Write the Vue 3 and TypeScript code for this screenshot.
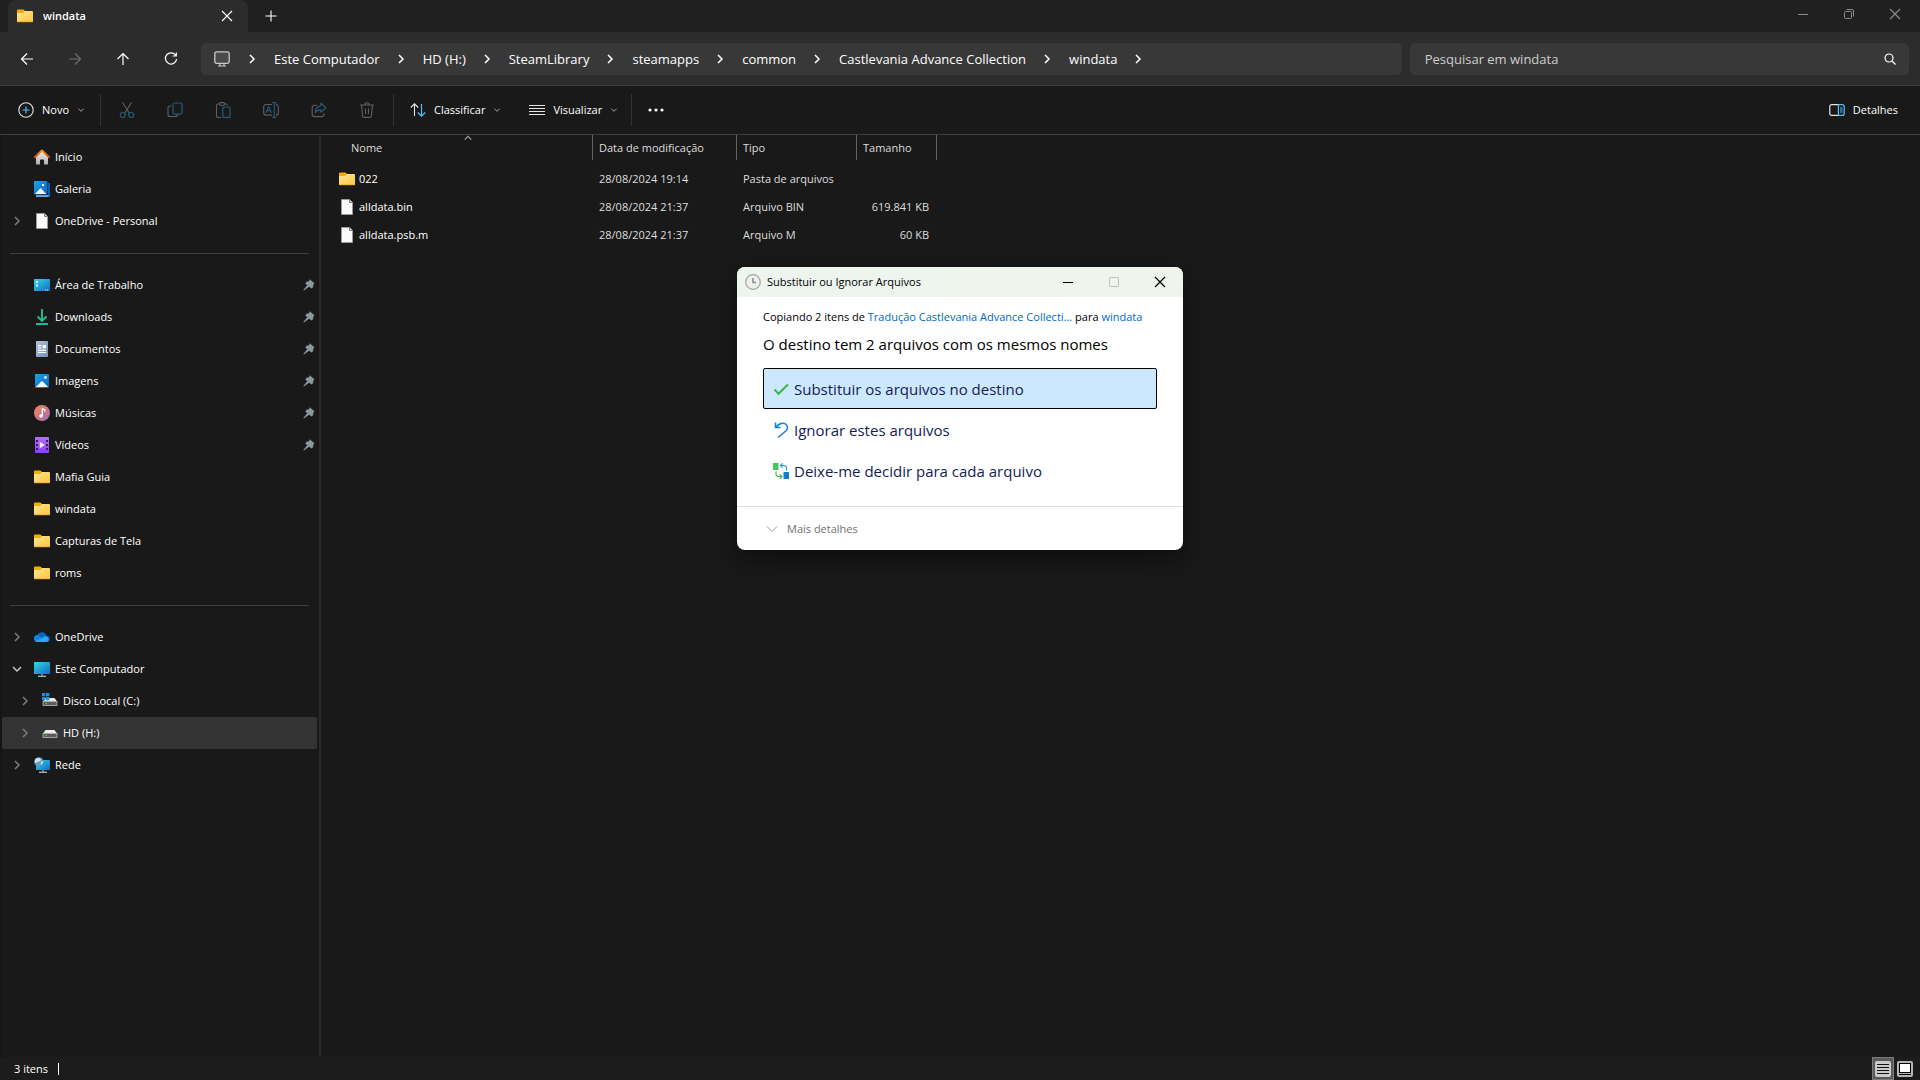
<script setup lang="ts">
import { ref } from 'vue'

interface NavItem {
  label: string
  icon: string
  arrow?: 'right' | 'down'
  pinned?: boolean
  child?: boolean
  selected?: boolean
}

interface FileRow {
  name: string
  icon: string
  date: string
  type: string
  size: string
}

const crumbs = ['Este Computador', 'HD (H:)', 'SteamLibrary', 'steamapps', 'common', 'Castlevania Advance Collection', 'windata']

const history = [
  { label: 'Voltar', icon: 'back', dim: false },
  { label: 'Avançar', icon: 'forward', dim: true },
  { label: 'Acima', icon: 'up', dim: false },
  { label: 'Atualizar', icon: 'refresh', dim: false },
]

const actions = [
  { label: 'Recortar', icon: 'cut' },
  { label: 'Copiar', icon: 'copy' },
  { label: 'Colar', icon: 'paste' },
  { label: 'Renomear', icon: 'rename' },
  { label: 'Compartilhar', icon: 'share' },
  { label: 'Excluir', icon: 'trash' },
]

const groups: NavItem[][] = [
  [
    { label: 'Início', icon: 'home' },
    { label: 'Galeria', icon: 'gallery' },
    { label: 'OneDrive - Personal', icon: 'file', arrow: 'right' },
  ],
  [
    { label: 'Área de Trabalho', icon: 'desktop', pinned: true },
    { label: 'Downloads', icon: 'download', pinned: true },
    { label: 'Documentos', icon: 'document', pinned: true },
    { label: 'Imagens', icon: 'picture', pinned: true },
    { label: 'Músicas', icon: 'music', pinned: true },
    { label: 'Vídeos', icon: 'video', pinned: true },
    { label: 'Mafia Guia', icon: 'folder' },
    { label: 'windata', icon: 'folder' },
    { label: 'Capturas de Tela', icon: 'folder' },
    { label: 'roms', icon: 'folder' },
  ],
  [
    { label: 'OneDrive', icon: 'cloud', arrow: 'right' },
    { label: 'Este Computador', icon: 'pc', arrow: 'down' },
    { label: 'Disco Local (C:)', icon: 'disk-c', arrow: 'right', child: true },
    { label: 'HD (H:)', icon: 'disk', arrow: 'right', child: true, selected: true },
    { label: 'Rede', icon: 'network', arrow: 'right' },
  ],
]

const files: FileRow[] = [
  { name: '022', icon: 'folder', date: '28/08/2024 19:14', type: 'Pasta de arquivos', size: '' },
  { name: 'alldata.bin', icon: 'file', date: '28/08/2024 21:37', type: 'Arquivo BIN', size: '619.841 KB' },
  { name: 'alldata.psb.m', icon: 'file', date: '28/08/2024 21:37', type: 'Arquivo M', size: '60 KB' },
]

const choices = [
  { label: 'Substituir os arquivos no destino', icon: 'check' },
  { label: 'Ignorar estes arquivos', icon: 'undo' },
  { label: 'Deixe-me decidir para cada arquivo', icon: 'decide' },
]

const query = ref('')
const choice = ref(0)
</script>

<template>
  <div class="explorer">
    <svg class="sprite" aria-hidden="true">
      <defs>
        <linearGradient id="g-folder" x1="0" y1="0" x2="1" y2="1">
          <stop offset="0" stop-color="#ffe69c" /><stop offset="1" stop-color="#fdc638" />
        </linearGradient>
        <linearGradient id="g-blue" x1="0" y1="0" x2="1" y2="1">
          <stop offset="0" stop-color="#20a4ea" /><stop offset="1" stop-color="#0b62be" />
        </linearGradient>
        <linearGradient id="g-screen" x1="0" y1="0" x2="1" y2="1">
          <stop offset="0" stop-color="#35d6e8" /><stop offset="1" stop-color="#0f6cc4" />
        </linearGradient>
        <linearGradient id="g-doc" x1="0" y1="0" x2="1" y2="1">
          <stop offset="0" stop-color="#b4c6dc" /><stop offset="1" stop-color="#7490b5" />
        </linearGradient>
        <linearGradient id="g-music" x1="0" y1="0" x2="1" y2="1">
          <stop offset="0" stop-color="#f5894e" /><stop offset="1" stop-color="#a566b8" />
        </linearGradient>
        <linearGradient id="g-video" x1="0" y1="0" x2="0" y2="1">
          <stop offset="0" stop-color="#b272f2" /><stop offset="1" stop-color="#8e3fe8" />
        </linearGradient>
        <linearGradient id="g-roof" x1="0" y1="0" x2="0" y2="1">
          <stop offset="0" stop-color="#f59a23" /><stop offset="1" stop-color="#d9480f" />
        </linearGradient>
        <linearGradient id="g-wall" x1="0" y1="0" x2="0" y2="1">
          <stop offset="0" stop-color="#f0f0f0" /><stop offset="1" stop-color="#adadad" />
        </linearGradient>
      </defs>

      <symbol id="folder" viewBox="0 0 16 16">
        <path d="M0 2.500a1 1 0 0 1 1-1h5.500L8 3V7H0z" fill="#f8ab06" />
        <path d="M0 5h6l2-2h7a1 1 0 0 1 1 1V13.500a.6.6 0 0 1-.6.600H.6A.6.600 0 0 1 0 13.500z" fill="url(#g-folder)" />
        <path d="M.5 13.800h15" stroke="#e6a31d" stroke-width=".8" />
      </symbol>
      <symbol id="file" viewBox="0 0 16 16">
        <path d="M2.500.5h8L13.500 3.500v12h-11z" fill="#fafafa" stroke="#9a9a9a" />
        <path d="M10.500.5v3h3" fill="#d0d0d0" stroke="#7d7d7d" />
      </symbol>
      <symbol id="home" viewBox="0 0 16 16">
        <path d="M2 7.500L8 2l6 5.500V15a.6.600 0 0 1-.6.600H10V11.500a1 1 0 0 0-1-1H7a1 1 0 0 0-1 1v4.100H2.600A.6.600 0 0 1 2 15z" fill="url(#g-wall)" />
        <path d="M.8 8.200L8 1.600l7.200 6.600" fill="none" stroke="url(#g-roof)" stroke-width="2" stroke-linejoin="round" stroke-linecap="round" />
      </symbol>
      <symbol id="gallery" viewBox="0 0 16 16">
        <path d="M2 14h12V2h1.400a.6.600 0 0 1 .6.600v12.800a.6.600 0 0 1-.6.600H2.600a.6.600 0 0 1-.6-.6z" fill="#0c5fb5" />
        <path d="M2 14.200h12.500V16H2.600a.6.600 0 0 1-.6-.6z" fill="#6aaee8" />
        <rect width="13.400" height="13.500" rx="1" fill="url(#g-blue)" />
        <path d="M1 13l4.800-5.300q.8-.8 1.600 0L12.300 13z" fill="#f4faff" />
        <rect x="8" y="3" width="2" height="2" fill="#fff" />
      </symbol>
      <symbol id="desktop" viewBox="0 0 16 16">
        <rect y="2" width="16" height="12" rx=".8" fill="url(#g-screen)" />
        <path d="M2 4h2v2H2zM2 7.500h2v2H2z" fill="#fff" />
        <path d="M11 13h1.200M13 13h1.200" stroke="#d5ecfa" />
      </symbol>
      <symbol id="download" viewBox="0 0 16 16">
        <path d="M8 0v11.500M3.500 7.500L8 12 12.500 7.500" fill="none" stroke="#21bd8d" stroke-width="1.900" />
        <path d="M2 15h12" stroke="#14b8a6" stroke-width="2" />
      </symbol>
      <symbol id="document" viewBox="0 0 16 16">
        <rect x="2" width="12" height="16" rx=".8" fill="url(#g-doc)" />
        <path d="M4 4.700h3.500M4 7h3.500M4 9.300h8M4 11.500h8" stroke="#fff" stroke-width="1.200" />
        <rect x="8.700" y="4" width="3.300" height="3.300" fill="#fff" />
      </symbol>
      <symbol id="picture" viewBox="0 0 16 16">
        <rect x="1" y="1" width="14" height="14" rx="1" fill="url(#g-blue)" />
        <path d="M2 14l5-5.300q1-.9 2 0L14 14z" fill="#f4faff" />
        <circle cx="11.500" cy="4.500" r="1.400" fill="#e8f6ff" />
      </symbol>
      <symbol id="music" viewBox="0 0 16 16">
        <circle cx="8" cy="8" r="8" fill="url(#g-music)" />
        <circle cx="7" cy="11" r="1.800" fill="#fff" />
        <path d="M8.300 11V3.600l2.600 1.300v1.800" fill="none" stroke="#fff" stroke-width="1.200" />
      </symbol>
      <symbol id="video" viewBox="0 0 16 16">
        <rect x="1" width="14" height="16" rx=".8" fill="url(#g-video)" />
        <path d="M2 3h2v2H2zM2 7h2v2H2zM2 11h2v2H2zM12 3h2v2h-2zM12 7h2v2h-2zM12 11h2v2h-2z" fill="#3c1a68" />
        <path d="M5.800 4.800l5.200 3.200-5.200 3.200z" fill="#f5ecff" />
      </symbol>
      <symbol id="cloud" viewBox="0 0 16 16">
        <path d="M3.500 13A3.500 3.500 0 0 1 3.300 6 5 5 0 0 1 12.600 7a3 3 0 0 1 .4 6z" fill="#0a63c2" />
        <path d="M0 9.500A3.600 3.600 0 0 1 5.200 6.500l5.800 6.500H3.500A3.500 3.500 0 0 1 0 9.500z" fill="#1086dc" />
        <path d="M1.500 12.400L9 8.300a3.500 3.500 0 0 1 3.400-.9A3 3 0 0 1 13 13H3.500a3.500 3.500 0 0 1-2-.6z" fill="#2ba8ee" />
      </symbol>
      <symbol id="pc" viewBox="0 0 16 16">
        <rect y="1" width="16" height="12" rx=".6" fill="url(#g-screen)" />
        <path d="M7.200 13h1.600v2H7.200z" fill="#7d8a96" />
        <path d="M4 15.300h8" stroke="#b8c2cc" stroke-width="1.200" />
      </symbol>
      <symbol id="disk" viewBox="0 0 16 16">
        <path d="M3.500 5h9L15 8.500H1z" fill="#ececec" />
        <rect x="1" y="8.500" width="14" height="4" fill="#5b5b5b" stroke="#b9b9b9" stroke-width=".8" />
        <rect x="3.500" y="9.800" width="1.400" height="1.400" fill="#2ee62e" />
      </symbol>
      <symbol id="disk-c" viewBox="0 0 16 16">
        <path d="M3.500 5h9L15 8.500H1z" fill="#ececec" />
        <rect x="1" y="8.500" width="14" height="4" fill="#5b5b5b" stroke="#b9b9b9" stroke-width=".8" />
        <rect x="3.500" y="9.800" width="1.400" height="1.400" fill="#2ee62e" />
        <path d="M0 0h3.300v3.300H0zM4 0h3.300v3.300H4zM0 4h3.300v3.300H0zM4 4h3.300v3.300H4z" fill="#1a8fe3" />
      </symbol>
      <symbol id="network" viewBox="0 0 16 16">
        <rect x="2" y="3" width="14" height="10" rx=".6" fill="url(#g-screen)" />
        <path d="M8.200 13h1.600v2H8.200z" fill="#7d8a96" />
        <path d="M5 15.300h8" stroke="#b8c2cc" stroke-width="1.200" />
        <circle cx="4.800" cy="4.800" r="4.600" fill="#5c9fc4" />
        <path d="M2 1.600q3-1.500 4.500.4T4 4.800 2.600 7.500Q-.6 4.800 2 1.600zM7.500 4l1.600.8-1.200 3L6.500 7z" fill="#cfe6f2" />
      </symbol>
      <symbol id="pin" viewBox="0 0 12 12">
        <path d="M6.800.3l4.900 4.200-1.300.8-.3 3L8.500 9.600 6 7.800 1 11.600.3 11 4.200 6.200 2.300 4.200l1.300-1.400 2.600-.7z" fill="#8e979e" />
      </symbol>
      <symbol id="chevron" viewBox="0 0 12 12">
        <path d="M4 2l4 4-4 4" fill="none" stroke="currentColor" stroke-width="1.500" />
      </symbol>
      <symbol id="chevron-down" viewBox="0 0 12 12">
        <path d="M2 4l4 4 4-4" fill="none" stroke="currentColor" stroke-width="1.500" />
      </symbol>
      <symbol id="chevron-thin" viewBox="0 0 12 12">
        <path d="M1 3.500l5 5 5-5" fill="none" stroke="currentColor" />
      </symbol>
      <symbol id="back" viewBox="0 0 16 16">
        <path d="M14 8H2.500M8 2.500L2.500 8 8 13.500" fill="none" stroke="currentColor" stroke-width="1.200" />
      </symbol>
      <symbol id="forward" viewBox="0 0 16 16">
        <path d="M2 8h11.500M8 2.500L13.500 8 8 13.500" fill="none" stroke="currentColor" stroke-width="1.200" />
      </symbol>
      <symbol id="up" viewBox="0 0 16 16">
        <path d="M8 14V2.500M2.500 8L8 2.500 13.500 8" fill="none" stroke="currentColor" stroke-width="1.200" />
      </symbol>
      <symbol id="refresh" viewBox="0 0 16 16">
        <path d="M13 4.800A5.600 5.600 0 1 0 13.600 8M13.300 1.500V5H9.500" fill="none" stroke="currentColor" stroke-width="1.200" />
      </symbol>
      <symbol id="monitor" viewBox="0 0 16 16">
        <rect x=".8" y=".8" width="14.400" height="11.600" rx="1.800" fill="#4a4a4a" stroke="#c9c9c9" stroke-width="1.300" />
        <path d="M6 12.500v2M10 12.500v2M4 15h8" stroke="#c9c9c9" stroke-width="1.200" />
      </symbol>
      <symbol id="search" viewBox="0 0 12 12">
        <circle cx="5" cy="5" r="4" fill="none" stroke="currentColor" stroke-width="1.200" />
        <path d="M8 8l3.500 3.500" stroke="currentColor" stroke-width="1.300" />
      </symbol>
      <symbol id="plus-circle" viewBox="0 0 16 16">
        <circle cx="8" cy="8" r="7.200" fill="none" stroke="#e4e4e4" stroke-width="1.100" />
        <path d="M8 4.500v7M4.500 8h7" stroke="#4cc2ff" stroke-width="1.200" />
      </symbol>
      <symbol id="cut" viewBox="0 0 16 16">
        <path d="M3.500.5l6.800 10.800M12.500.5L5.700 11.300" stroke="#5e5e5e" stroke-width="1.100" />
        <circle cx="3.800" cy="13" r="2.500" fill="none" stroke="#265a76" stroke-width="1.200" />
        <circle cx="12.200" cy="13" r="2.500" fill="none" stroke="#265a76" stroke-width="1.200" />
      </symbol>
      <symbol id="copy" viewBox="0 0 16 16">
        <path d="M4.500 4H3a2 2 0 0 0-2 2v6.500a2 2 0 0 0 2 2h5.500a2 2 0 0 0 2-2" fill="none" stroke="#5e5e5e" stroke-width="1.100" />
        <rect x="6" y="1" width="9" height="11.200" rx="1.800" fill="none" stroke="#265a76" stroke-width="1.200" />
      </symbol>
      <symbol id="paste" viewBox="0 0 16 16">
        <path d="M4.500 2H3a1.500 1.500 0 0 0-1.500 1.500v10.500a1.500 1.500 0 0 0 1.500 1.500h3.500M9.500 2H11a1.500 1.500 0 0 1 1.500 1.300" fill="none" stroke="#5e5e5e" stroke-width="1.100" />
        <rect x="4.500" y=".6" width="5" height="2.600" rx="1" fill="none" stroke="#5e5e5e" stroke-width="1.100" />
        <rect x="7.800" y="5" width="7.200" height="10.400" rx="1" fill="none" stroke="#265a76" stroke-width="1.200" />
      </symbol>
      <symbol id="rename" viewBox="0 0 16 16">
        <path d="M9 2.500H3a2.300 2.300 0 0 0-2.300 2.300v6A2.300 2.300 0 0 0 3 13.100h6M13 2.500a2.300 2.300 0 0 1 2.300 2.300v6a2.300 2.300 0 0 1-2.300 2.300" fill="none" stroke="#5e5e5e" stroke-width="1.100" />
        <path d="M11.300.6v14.800M9.300.6h4M9.300 15.400h4M3 11l2.700-6.500L8.400 11M4 8.800h3.400" fill="none" stroke="#265a76" stroke-width="1.100" />
      </symbol>
      <symbol id="share" viewBox="0 0 16 16">
        <path d="M6 3.200H3.500A2.300 2.300 0 0 0 1.200 5.500v6.800a2.300 2.300 0 0 0 2.300 2.300h7.300a2.300 2.300 0 0 0 2.300-2.300v-1" fill="none" stroke="#5e5e5e" stroke-width="1.100" />
        <path d="M9.800 1.200l5.200 4.500-5.200 4.500V7.800Q6 7.600 4.200 10.800 4.600 4.500 9.800 3.800z" fill="none" stroke="#265a76" stroke-width="1.200" stroke-linejoin="round" />
      </symbol>
      <symbol id="trash" viewBox="0 0 16 16">
        <path d="M1 3h14M5.700 3q.2-2.200 2.300-2.200T10.300 3M2.500 3l1.100 11a1.500 1.500 0 0 0 1.500 1.400h5.800a1.500 1.500 0 0 0 1.500-1.400L13.500 3M6.500 6.500v5.500M9.500 6.500v5.500" fill="none" stroke="#5e5e5e" stroke-width="1.100" />
      </symbol>
      <symbol id="sort" viewBox="0 0 16 16">
        <path d="M4.500 14V2M.8 5.500l3.700-3.700 3.700 3.700" fill="none" stroke="#e4e4e4" stroke-width="1.100" />
        <path d="M11.500 2v12M7.800 10.500l3.700 3.700 3.700-3.700" fill="none" stroke="#4cc2ff" stroke-width="1.200" />
      </symbol>
      <symbol id="lines" viewBox="0 0 16 16">
        <path d="M0 3.500h16M0 6.500h16M0 9.500h16M0 12.500h16" stroke="#e4e4e4" />
      </symbol>
      <symbol id="dots" viewBox="0 0 16 16">
        <circle cx="2" cy="8" r="1.600" fill="#fff" /><circle cx="8" cy="8" r="1.600" fill="#fff" /><circle cx="14" cy="8" r="1.600" fill="#fff" />
      </symbol>
      <symbol id="pane" viewBox="0 0 16 16">
        <path d="M9 2.600H2.800A2 2 0 0 0 .8 4.600v6.800a2 2 0 0 0 2 2H9" fill="none" stroke="#e4e4e4" stroke-width="1.200" />
        <path d="M9.400 2.600h3.800a2 2 0 0 1 2 2v6.800a2 2 0 0 1-2 2H9.400zM11 6h2.600M11 8h2.600M11 10h2.600" fill="none" stroke="#4cc2ff" stroke-width="1.200" />
      </symbol>
      <symbol id="close" viewBox="0 0 12 12">
        <path d="M1 1l10 10M11 1L1 11" stroke="currentColor" stroke-width="1.200" />
      </symbol>
      <symbol id="add" viewBox="0 0 12 12">
        <path d="M6 .5v11M.5 6h11" stroke="currentColor" stroke-width="1.100" />
      </symbol>
      <symbol id="minimize" viewBox="0 0 12 12">
        <path d="M1 6.500h10" stroke="currentColor" />
      </symbol>
      <symbol id="restore" viewBox="0 0 12 12">
        <rect x="1.500" y="3.500" width="7" height="7" rx="1" fill="none" stroke="currentColor" />
        <path d="M3.500 1.500H9A1.500 1.500 0 0 1 10.500 3v5.500" fill="none" stroke="currentColor" />
      </symbol>
      <symbol id="maximize" viewBox="0 0 12 12">
        <rect x="1.500" y="1.500" width="9" height="9" rx=".6" fill="none" stroke="currentColor" />
      </symbol>
      <symbol id="clock" viewBox="0 0 16 16">
        <circle cx="8" cy="8" r="7.300" fill="#efefef" stroke="#a2a2a2" stroke-width="1.200" />
        <path d="M8 4v4.500h3" fill="none" stroke="#8c8c8c" stroke-width="1.600" />
      </symbol>
      <symbol id="check" viewBox="0 0 16 16">
        <path d="M1.500 8.500l4 4.300L15 3.500" fill="none" stroke="#3fb549" stroke-width="2" />
      </symbol>
      <symbol id="undo" viewBox="0 0 16 16">
        <path d="M2.500.5v5h5M2.800 5.200Q8-.5 12.800 2.200q3.300 3.300.3 6.600L5 15.500" fill="none" stroke="#1683d8" stroke-width="1.500" />
      </symbol>
      <symbol id="decide" viewBox="0 0 16 16">
        <rect width="5.500" height="7" rx=".5" fill="#46c95a" />
        <rect x="10.500" y="9" width="5.500" height="7" rx=".5" fill="#0f7bd7" />
        <path d="M3 8.500V11q0 2.500 2.500 2.500H9M6.800 11.300L9 13.500l-2.200 2.300" fill="none" stroke="#3fae3f" stroke-width="1.100" />
        <path d="M13.500 7.500V5q0-2.500-2.500-2.500H7.500M9.700.3L7.500 2.500l2.200 2.200" fill="none" stroke="#2196e3" stroke-width="1.100" />
      </symbol>
      <symbol id="view-list" viewBox="0 0 16 16">
        <rect width="16" height="16" rx="2" fill="#cbcbcb" />
        <path d="M2 3.500h12M2 6.500h12M2 9.500h12M2 12.500h12" stroke="#111" />
      </symbol>
      <symbol id="view-tiles" viewBox="0 0 16 16">
        <rect width="16" height="16" rx="2" fill="#b5b5b5" />
        <rect x="2.500" y="2.500" width="11" height="9" fill="#fff" stroke="#000" />
        <path d="M2 13.500h12" stroke="#000" />
      </symbol>
    </svg>

    <header>
      <div class="tabs">
        <div class="tab">
          <svg class="i16"><use href="#folder" /></svg>
          <span class="tab-title">windata</span>
          <button type="button" class="tab-close" aria-label="Fechar guia"><svg class="i12"><use href="#close" /></svg></button>
        </div>
        <button type="button" class="tab-add" aria-label="Nova guia"><svg class="i12"><use href="#add" /></svg></button>
        <div class="window-buttons">
          <button type="button" aria-label="Minimizar"><svg class="i12"><use href="#minimize" /></svg></button>
          <button type="button" aria-label="Restaurar"><svg class="i12"><use href="#restore" /></svg></button>
          <button type="button" aria-label="Fechar"><svg class="i12"><use href="#close" /></svg></button>
        </div>
      </div>

      <div class="address-row">
        <div class="history">
          <button v-for="h in history" :key="h.icon" type="button" :class="{ dim: h.dim }" :aria-label="h.label">
            <svg class="i16"><use :href="'#' + h.icon" /></svg>
          </button>
        </div>
        <nav class="address" aria-label="Caminho">
          <svg class="i16 monitor"><use href="#monitor" /></svg>
          <svg class="i12"><use href="#chevron" /></svg>
          <template v-for="c in crumbs" :key="c">
            <a href="#">{{ c }}</a>
            <svg class="i12"><use href="#chevron" /></svg>
          </template>
        </nav>
        <div class="search">
          <input v-model="query" type="search" placeholder="Pesquisar em windata" aria-label="Pesquisar em windata" />
          <svg class="i12"><use href="#search" /></svg>
        </div>
      </div>

      <div class="toolbar">
        <button type="button" class="command new"><svg class="i16"><use href="#plus-circle" /></svg>Novo<svg class="caret"><use href="#chevron-down" /></svg></button>
        <div class="actions">
          <button v-for="a in actions" :key="a.icon" type="button" :aria-label="a.label">
            <svg class="i16"><use :href="'#' + a.icon" /></svg>
          </button>
        </div>
        <div class="view-commands">
          <button type="button" class="command"><svg class="i16"><use href="#sort" /></svg>Classificar<svg class="caret"><use href="#chevron-down" /></svg></button>
          <button type="button" class="command"><svg class="i16"><use href="#lines" /></svg>Visualizar<svg class="caret"><use href="#chevron-down" /></svg></button>
        </div>
        <button type="button" class="more" aria-label="Ver mais"><svg class="i16"><use href="#dots" /></svg></button>
        <button type="button" class="command details"><svg class="i16"><use href="#pane" /></svg>Detalhes</button>
      </div>
    </header>

    <div class="body">
      <nav class="sidebar" aria-label="Painel de navegação">
        <ul v-for="(group, g) in groups" :key="g">
          <li v-for="item in group" :key="item.label">
            <a href="#" :class="{ child: item.child, selected: item.selected }">
              <span class="arrow" :class="item.arrow">
                <svg v-if="item.arrow" class="i12"><use :href="item.arrow === 'down' ? '#chevron-down' : '#chevron'" /></svg>
              </span>
              <svg class="i16"><use :href="'#' + item.icon" /></svg>
              <span class="label">{{ item.label }}</span>
              <svg v-if="item.pinned" class="i12"><use href="#pin" /></svg>
            </a>
          </li>
        </ul>
      </nav>

      <main>
        <table>
          <thead>
            <tr>
              <th class="col-name" aria-sort="ascending">Nome<svg class="sort-mark"><use href="#chevron-down" /></svg></th>
              <th class="col-date">Data de modificação</th>
              <th class="col-type">Tipo</th>
              <th class="col-size">Tamanho</th>
            </tr>
          </thead>
          <tbody>
            <tr v-for="f in files" :key="f.name">
              <td class="name"><span><svg class="i16"><use :href="'#' + f.icon" /></svg>{{ f.name }}</span></td>
              <td>{{ f.date }}</td>
              <td>{{ f.type }}</td>
              <td class="size">{{ f.size }}</td>
            </tr>
          </tbody>
        </table>
      </main>
    </div>

    <footer>
      <span class="count">3 itens</span>
      <button type="button" class="active" aria-label="Detalhes"><svg class="i16"><use href="#view-list" /></svg></button>
      <button type="button" aria-label="Ícones grandes"><svg class="i16"><use href="#view-tiles" /></svg></button>
    </footer>

    <section class="dialog" role="dialog" aria-labelledby="dialog-title">
      <div class="dialog-bar">
        <svg class="i16"><use href="#clock" /></svg>
        <span id="dialog-title">Substituir ou Ignorar Arquivos</span>
        <button type="button" aria-label="Minimizar"><svg class="i12"><use href="#minimize" /></svg></button>
        <button type="button" aria-label="Maximizar" disabled><svg class="i12"><use href="#maximize" /></svg></button>
        <button type="button" aria-label="Fechar"><svg class="i12"><use href="#close" /></svg></button>
      </div>
      <div class="dialog-body">
        <p>Copiando 2 itens de <a href="#">Tradução Castlevania Advance Collecti...</a> para <a href="#">windata</a></p>
        <h1>O destino tem 2 arquivos com os mesmos nomes</h1>
        <button v-for="(c, i) in choices" :key="c.icon" type="button" class="choice" :class="{ focused: choice === i }" @click="choice = i">
          <svg class="i16"><use :href="'#' + c.icon" /></svg>{{ c.label }}
        </button>
      </div>
      <div class="dialog-foot">
        <button type="button"><svg class="i12"><use href="#chevron-thin" /></svg>Mais detalhes</button>
      </div>
    </section>
  </div>
</template>

<style>
body {
  margin: 0;
  background: #191919;
}
</style>

<style scoped>
.explorer {
  position: relative;
  display: flex;
  flex-direction: column;
  min-height: 100vh;
  background: #191919;
  color: #fff;
  font-family: "Open Sans", "Noto Sans", sans-serif;
  font-size: 11px;
  line-height: 16px;
}
.explorer * {
  box-sizing: border-box;
}
.sprite {
  position: absolute;
  width: 0;
  height: 0;
}
svg {
  display: block;
  flex: none;
}
.i16 {
  width: 16px;
  height: 16px;
}
.i12 {
  width: 12px;
  height: 12px;
}
button {
  display: flex;
  align-items: center;
  justify-content: center;
  padding: 0;
  border: 0;
  background: none;
  color: inherit;
  font: inherit;
}
a {
  color: inherit;
  text-decoration: none;
}

/* Title bar */
.tabs {
  display: flex;
  height: 32px;
  background: #202020;
}
.tab {
  display: flex;
  align-items: center;
  width: 240px;
  margin-left: 8px;
  padding: 0 8px 0 9px;
  border-radius: 8px 8px 0 0;
  background: #2c2c2c;
  font-weight: 600;
}
.tab-title {
  flex: 1;
  padding-left: 10px;
}
.tab-close {
  width: 26px;
  height: 24px;
}
.tab-add {
  width: 46px;
}
.window-buttons {
  display: flex;
  margin-left: auto;
  padding: 0 2px 4px 0;
  color: #8a8a8a;
}
.window-buttons button {
  width: 46px;
}

/* Address row */
.address-row {
  display: flex;
  align-items: center;
  height: 54px;
  padding-right: 11px;
  border-bottom: 1px solid #3f3f3f;
  background: #2c2c2c;
  font-size: 13px;
  line-height: 20px;
}
.history {
  display: flex;
  width: 201px;
  padding-left: 3px;
}
.history button {
  width: 48px;
  height: 32px;
}
.history .dim {
  color: #6f6f6f;
}
.address {
  display: flex;
  flex: 63;
  align-items: center;
  height: 32px;
  padding-left: 13px;
  border-radius: 5px;
  background: #383838;
  white-space: nowrap;
}
.address .monitor {
  margin-right: 16px;
}
.address a {
  padding: 0 15px 0 16px;
}
.search {
  display: flex;
  flex: 25;
  align-items: center;
  height: 32px;
  margin-left: 8px;
  padding: 0 13px 0 15px;
  border-radius: 5px;
  background: #383838;
}
.search input {
  flex: 1;
  min-width: 0;
  padding: 0;
  border: 0;
  outline: 0;
  background: none;
  color: #fff;
  font: inherit;
}
.search input::placeholder {
  color: #cecece;
  opacity: 1;
}

/* Command bar */
.toolbar {
  display: flex;
  align-items: center;
  height: 49px;
  padding: 0 22px 0 18px;
  border-bottom: 1px solid #3f3f3f;
}
.command {
  gap: 8px;
}
.caret {
  width: 8px;
  height: 8px;
  color: #a5a5a5;
}
.new {
  width: 83px;
  height: 32px;
  justify-content: flex-start;
  border-right: 1px solid #333;
}
.actions {
  display: flex;
  height: 32px;
  padding: 0 2px;
  border-right: 1px solid #333;
}
.actions button {
  width: 48px;
}
.view-commands {
  display: flex;
  gap: 28px;
  width: 238px;
  height: 32px;
  padding-left: 16px;
  border-right: 1px solid #333;
}
.more {
  width: 48px;
  height: 32px;
}
.details {
  margin-left: auto;
}

/* Body */
.body {
  display: flex;
  flex: 1;
}
.sidebar {
  width: 321px;
  padding: 6px 2px 0 0;
  border-left: 2px solid #141414;
  border-right: 2px solid #2a2a2a;
}
.sidebar ul {
  margin: 0;
  padding: 0;
  list-style: none;
}
.sidebar ul + ul::before {
  content: "";
  display: block;
  height: 1px;
  margin: 16px 8px 15px;
  background: #3d3d3d;
}
.sidebar a {
  display: flex;
  align-items: center;
  height: 32px;
  padding: 0 2px 0 8px;
}
.sidebar .child {
  padding-left: 16px;
}
.sidebar .selected {
  border-radius: 2px;
  background: #333;
}
.arrow {
  width: 24px;
  padding-left: 1px;
  color: #7c7c7c;
}
.arrow.down {
  color: #c8c8c8;
}
.label {
  flex: 1;
  padding-left: 5px;
}

/* File list */
main {
  flex: 1;
}
table {
  width: 616px;
  border-collapse: separate;
  border-spacing: 0;
  table-layout: fixed;
}
th {
  position: relative;
  height: 25px;
  padding: 0 6px;
  border-right: 1px solid #636363;
  color: #dedede;
  font-weight: 400;
  text-align: left;
}
.col-name {
  width: 272px;
  padding-left: 30px;
}
.col-date {
  width: 144px;
}
.col-type {
  width: 120px;
}
.col-size {
  width: 80px;
}
.sort-mark {
  position: absolute;
  top: -2px;
  left: 141px;
  width: 12px;
  height: 10px;
  color: #a0a0a0;
  transform: rotate(180deg);
}
tbody::before {
  content: "";
  display: block;
  height: 5px;
}
td {
  height: 28px;
  padding: 0 8px 0 6px;
  color: #dedede;
}
td.name {
  padding-left: 18px;
  color: #fff;
}
td.name span {
  display: flex;
  align-items: center;
  gap: 4px;
}
td.size {
  text-align: right;
}

/* Status bar */
footer {
  display: flex;
  align-items: center;
  height: 23px;
  padding-right: 4px;
  background: #1c1c1c;
}
.count {
  margin-right: auto;
  padding: 0 10px 0 14px;
  border-right: 1px solid #fff;
  line-height: 12px;
}
footer button {
  width: 22px;
  height: 23px;
}
footer .active {
  border: 1px solid #7c7c7c;
  background: #5a5a5a;
}

/* Copy conflict dialog */
.dialog {
  position: absolute;
  top: 267px;
  left: 0;
  right: 0;
  width: 446px;
  margin: 0 auto;
  overflow: hidden;
  border-radius: 8px;
  background: #fff;
  box-shadow: 0 10px 28px rgba(0, 0, 0, 0.45);
  color: #000;
}
.dialog-bar {
  display: flex;
  align-items: center;
  height: 30px;
  padding-left: 8px;
  background: linear-gradient(90deg, #ecf5ee, #f0f4ec);
}
.dialog-bar span {
  flex: 1;
  padding-left: 6px;
}
.dialog-bar button {
  width: 46px;
  height: 30px;
}
.dialog-bar button:disabled {
  color: #bcc0ba;
}
.dialog-body {
  padding: 12px 26px 15px;
}
.dialog-body p {
  margin: 0;
  white-space: nowrap;
}
.dialog-body p a {
  color: #0066cc;
}
.dialog-body h1 {
  margin: 9px 0 14px;
  font-size: 15px;
  font-weight: 400;
  line-height: 20px;
  white-space: nowrap;
}
.choice {
  width: 100%;
  height: 41px;
  justify-content: flex-start;
  gap: 5px;
  padding-left: 9px;
  border: 1px solid transparent;
  border-radius: 2px;
  color: #151c55;
  font-size: 15px;
}
.choice.focused {
  border-color: #000;
  background: #cce8ff;
}
.dialog-foot {
  padding: 14px 29px 13px;
  border-top: 1px solid #dfdfdf;
}
.dialog-foot button {
  gap: 9px;
  color: #707070;
}
.dialog-foot svg {
  color: #9c9c9c;
}
</style>
